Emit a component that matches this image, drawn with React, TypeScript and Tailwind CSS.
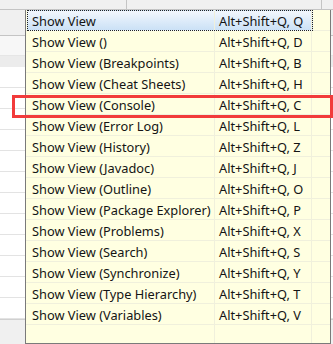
import React from "react";

const rows: [string, string][] = [
  ["Show View", "Alt+Shift+Q, Q"],
  ["Show View ()", "Alt+Shift+Q, D"],
  ["Show View (Breakpoints)", "Alt+Shift+Q, B"],
  ["Show View (Cheat Sheets)", "Alt+Shift+Q, H"],
  ["Show View (Console)", "Alt+Shift+Q, C"],
  ["Show View (Error Log)", "Alt+Shift+Q, L"],
  ["Show View (History)", "Alt+Shift+Q, Z"],
  ["Show View (Javadoc)", "Alt+Shift+Q, J"],
  ["Show View (Outline)", "Alt+Shift+Q, O"],
  ["Show View (Package Explorer)", "Alt+Shift+Q, P"],
  ["Show View (Problems)", "Alt+Shift+Q, X"],
  ["Show View (Search)", "Alt+Shift+Q, S"],
  ["Show View (Synchronize)", "Alt+Shift+Q, Y"],
  ["Show View (Type Hierarchy)", "Alt+Shift+Q, T"],
  ["Show View (Variables)", "Alt+Shift+Q, V"],
];

export default function App() {
  return (
    <div className="relative w-[333px] h-[344px] overflow-hidden bg-[#f0f0f0] font-['Microsoft_YaHei','Noto_Sans',sans-serif] text-[12.8px] text-[#141414]">
      {/* background window */}
      <div className="flex flex-col h-full">
        <div className="h-[10px] flex border-b border-[#c4c4c4]">
          <div className="w-[127px] border-r border-[#c4c4c4]" />
          <div className="w-[195px] border-r border-[#c4c4c4]" />
          <div className="flex-1" />
        </div>
        <div className="h-[26px] border-b border-[#c4c4c4]" />
        <div className="h-[20px] bg-[#f7f7f7] border-b border-[#e6e6e6]" />
        <div className="h-[11px] bg-[#ececec]" />
        <div className="flex flex-col bg-white">
          {Array.from({ length: 12 }).map((_, i) => (
            <div key={i} className="h-[21px] border-b border-[#e3e3e3]" />
          ))}
        </div>
        <div className="flex-1 border-t border-[#d0d0d0] bg-[#f0f0f0]" />
      </div>

      {/* popup */}
      <div className="absolute left-[25px] top-[10px] w-[306px] h-[334px] bg-[#ffffe1] border border-t-0 border-[#7a7a7a] flex flex-col">
        {rows.map(([label, key], i) => (
          <div key={i} className="relative h-[21px] flex border-b border-[#f0f0dc]">
            {i === 0 && (
              <div className="absolute left-[1px] top-0 w-[286px] h-[21px] bg-gradient-to-b from-[#f2f7fd] to-[#cbe1f6] border border-dotted border-[#222]" />
            )}
            <div className="relative w-[189px] pl-[6px] pt-[3px] flex items-center border-r border-[#f0f0dc] whitespace-nowrap">
              {label}
            </div>
            <div className="relative w-[97px] pl-[4px] pt-[3px] flex items-center border-r border-[#f0f0dc] whitespace-nowrap">
              {key}
            </div>
            <div className="flex-1" />
          </div>
        ))}
        <div className="flex-1 flex">
          <div className="w-[189px] border-r border-[#f0f0dc]" />
          <div className="w-[97px] border-r border-[#f0f0dc]" />
        </div>
      </div>

      {/* red highlight */}
      <div className="absolute left-[12px] top-[95px] w-[321px] h-[23px] border-[3px] border-[#f23b3b]" />
    </div>
  );
}
